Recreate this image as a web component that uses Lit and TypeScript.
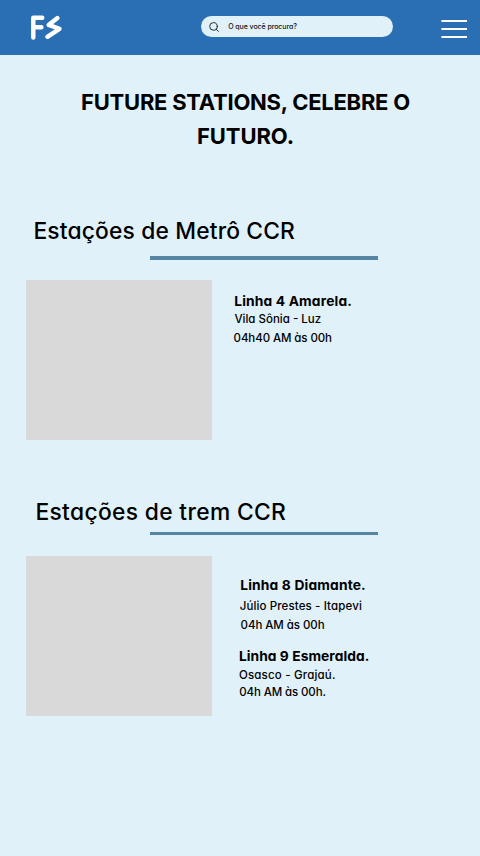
import { LitElement, html, css } from "lit";

class AppHeader extends LitElement {
  static styles = css`
    :host {
      display: flex;
      align-items: flex-start;
      box-sizing: border-box;
      height: 54.7px;
      padding: 14px 13px 0 30px;
      background: #2a6fb3;
    }
    .logo { width: 34px; height: 28px; flex: none; }
    .search {
      display: flex;
      align-items: center;
      box-sizing: border-box;
      width: 192px;
      height: 20.8px;
      margin: 2.4px 0 0 137px;
      padding-left: 8px;
      border-radius: 11px;
      background: #e1f1fa;
    }
    .search svg { width: 10px; height: 10px; flex: none; }
    .search span {
      margin-left: 9.2px;
      font-size: 7px;
      font-weight: 500;
      line-height: 12px;
      letter-spacing: -0.06px;
      color: #111;
      white-space: nowrap;
    }
    .menu { width: 26px; height: 20px; margin: 5px 0 0 auto; }
  `;
  render() {
    return html`
      <svg class="logo" viewBox="0 0 34 28" fill="none" stroke="#fff" stroke-width="4.4" stroke-linecap="round" stroke-linejoin="round">
        <path d="M3.3 23.6V3.8H12.3M3.3 13.2H11.4" />
        <path d="M27.4 4L18.6 10.9L29.5 14.8L17.4 22.8" />
      </svg>
      <div class="search">
        <svg viewBox="0 0 10 10" fill="none" stroke="#222" stroke-width="0.95" stroke-linecap="round">
          <circle cx="4.5" cy="4.4" r="3.8" />
          <path d="M7.2 7.2L9.4 9.4" />
        </svg>
        <span>O que você procura?</span>
      </div>
      <svg class="menu" viewBox="0 0 26 20" stroke="#fff" stroke-width="2.1">
        <path d="M.4 2H26M.4 10H26M.4 18H26" />
      </svg>
    `;
  }
}
customElements.define("app-header", AppHeader);

class AppRoot extends LitElement {
  static styles = css`
    :host {
      display: block;
      min-height: 856px;
      background: #e1f1fa;
      color: #000;
      font-family: Inter, "Open Sans", sans-serif;
      font-feature-settings: "cv11";
    }
    main { display: flow-root; }
    h1, h2, h3, p { margin: 0; white-space: nowrap; }
    h1 {
      margin-top: 31.5px;
      padding-left: 11px;
      text-align: center;
      font-size: 22px;
      font-weight: 700;
      line-height: 33.5px;
      letter-spacing: -0.25px;
    }
    h1 span { letter-spacing: -0.1px; }
    h2 { font-size: 22.8px; font-weight: 500; line-height: 30px; }
    .metro h2 { margin: 63.1px 0 0 33.4px; letter-spacing: 0.16px; }
    .trem h2 { margin: 57px 0 0 35.4px; letter-spacing: 0.34px; }
    .rule { width: 228px; height: 3.3px; margin-left: 150px; background: #5686a4; }
    .metro .rule { margin-top: 10px; }
    .trem .rule { margin-top: 5px; }
    .card { display: flex; margin-left: 26px; height: 160px; }
    .metro .card { margin-top: 20.3px; }
    .trem .card { margin-top: 20.6px; }
    .photo { width: 186px; flex: none; background: #d9d9d9; }
    .info { margin-left: 21px; }
    .metro .info { padding-top: 12.2px; }
    .trem .info { padding-top: 20.2px; }
    h3 { font-size: 13.8px; font-weight: 700; line-height: 18px; }
    p { font-size: 11.5px; font-weight: 500; line-height: 18px; }
    .l4 { padding-left: 1.2px; letter-spacing: 0.15px; }
    .l4-route { padding-left: 1.4px; letter-spacing: 0; }
    .l4-time { margin-top: 1px; padding-left: 0.6px; letter-spacing: -0.1px; }
    .l8 { padding-left: 7.2px; letter-spacing: 0.16px; }
    .l8-route { margin-top: 3px; padding-left: 6.7px; letter-spacing: 0.12px; }
    .l8-time { margin-top: 1.2px; padding-left: 7.6px; letter-spacing: -0.07px; }
    .l9 { margin-top: 12.4px; padding-left: 5.9px; letter-spacing: 0.05px; }
    .l9-route { margin-top: 1.1px; padding-left: 5.9px; letter-spacing: 0.19px; }
    .l9-time { margin-top: -0.6px; padding-left: 6.2px; letter-spacing: -0.12px; }
  `;
  render() {
    return html`
      <app-header></app-header>
      <main>
        <h1>FUTURE STATIONS, CELEBRE O<br /><span>FUTURO.</span></h1>
        <section class="metro">
          <h2>Estações de Metrô CCR</h2>
          <div class="rule"></div>
          <div class="card">
            <div class="photo"></div>
            <div class="info">
              <h3 class="l4">Linha 4 Amarela.</h3>
              <p class="l4-route">Vila Sônia - Luz</p>
              <p class="l4-time">04h40 AM às 00h</p>
            </div>
          </div>
        </section>
        <section class="trem">
          <h2>Estações de trem CCR</h2>
          <div class="rule"></div>
          <div class="card">
            <div class="photo"></div>
            <div class="info">
              <h3 class="l8">Linha 8 Diamante.</h3>
              <p class="l8-route">Júlio Prestes - Itapevi</p>
              <p class="l8-time">04h AM às 00h</p>
              <h3 class="l9">Linha 9 Esmeralda.</h3>
              <p class="l9-route">Osasco - Grajaú.</p>
              <p class="l9-time">04h AM às 00h.</p>
            </div>
          </div>
        </section>
      </main>
    `;
  }
}
customElements.define("app-root", AppRoot);
